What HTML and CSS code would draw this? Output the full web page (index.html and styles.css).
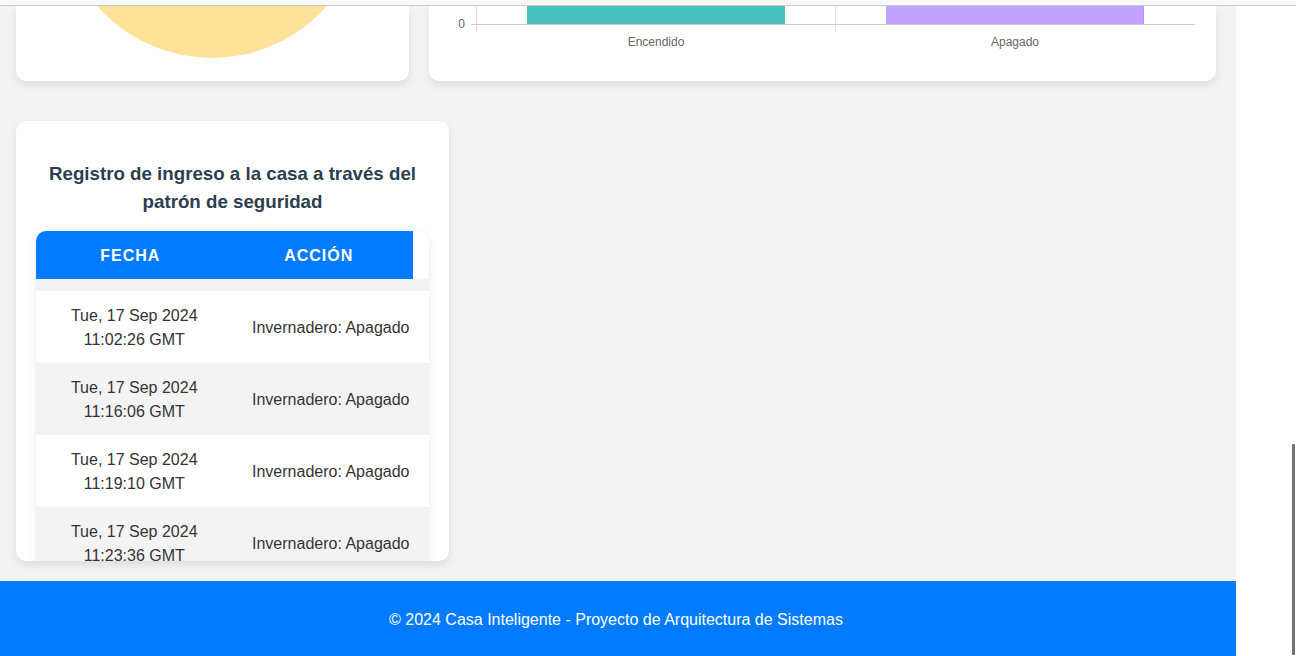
FILE: index.html
```html
<!DOCTYPE html>
<html lang="es">
<head>
<meta charset="utf-8">
<title>Casa Inteligente</title>
<link rel="stylesheet" href="styles.css">
</head>
<body>
<div class="topbar"></div>
<div class="page">
  <div class="main">
    <div class="content">
      <div class="charts">
        <div class="card card-cut">
          <svg class="chart" viewBox="16 6 393 75" width="393" height="75">
            <circle cx="212" cy="-95" r="153" fill="#FFE29A"/>
          </svg>
        </div>
        <div class="card card-cut">
          <svg class="chart" viewBox="429 6 787 75" width="787" height="75">
            <rect x="527" y="6" width="258" height="18" fill="#4BC0C0"/>
            <rect x="886" y="6" width="258" height="18" fill="#C2A3FF"/>
            <line x1="1143.5" y1="6" x2="1143.5" y2="24" stroke="#b494ff" stroke-width="1"/>
            <line x1="476.5" y1="6" x2="476.5" y2="32" stroke="#dcdcdc" stroke-width="1"/>
            <line x1="835.5" y1="6" x2="835.5" y2="32" stroke="#e4e4e4" stroke-width="1"/>
            <line x1="471" y1="24.5" x2="1195" y2="24.5" stroke="#cfcfcf" stroke-width="1"/>
            <text x="465" y="28" text-anchor="end" class="tick">0</text>
            <text x="656" y="46" text-anchor="middle" class="tick">Encendido</text>
            <text x="1015" y="46" text-anchor="middle" class="tick">Apagado</text>
          </svg>
        </div>
      </div>

      <div class="card log-card">
        <h3 class="log-title">Registro de ingreso a la casa a través del patrón de seguridad</h3>
        <div class="log">
          <table class="log-head">
            <thead><tr><th>FECHA</th><th>ACCIÓN</th></tr></thead>
          </table>
          <div class="log-body">
            <table class="log-rows">
              <tbody>
                <tr><td>Tue, 17 Sep 2024<br>11:02:26 GMT</td><td>Invernadero: Apagado</td></tr>
                <tr><td>Tue, 17 Sep 2024<br>11:16:06 GMT</td><td>Invernadero: Apagado</td></tr>
                <tr><td>Tue, 17 Sep 2024<br>11:19:10 GMT</td><td>Invernadero: Apagado</td></tr>
                <tr><td>Tue, 17 Sep 2024<br>11:23:36 GMT</td><td>Invernadero: Apagado</td></tr>
              </tbody>
            </table>
          </div>
        </div>
      </div>
    </div>
    <footer class="footer">© 2024 Casa Inteligente - Proyecto de Arquitectura de Sistemas</footer>
  </div>
  <div class="gutter"><div class="thumb"></div></div>
</div>
</body>
</html>
```

FILE: styles.css
```css
* { box-sizing: border-box; }

html, body {
  margin: 0;
  padding: 0;
  background: #ffffff;
  font-family: "Liberation Sans", Arial, sans-serif;
  color: #333;
  height: 656px;
  overflow: hidden;
}

.topbar {
  position: relative;
  z-index: 2;
  height: 6px;
  background: #f9f9f9;
  border-bottom: 1px solid #c9c9c9;
}

.page {
  display: flex;
}

.main {
  width: 1236px;
  background: #f3f3f3;
  display: flex;
  flex-direction: column;
}

.content {
  padding: 0 20px 20px 16px;
}

.charts {
  display: grid;
  grid-template-columns: 393px 787px;
  gap: 20px;
  margin-bottom: 40px;
}

.card {
  background: #ffffff;
  border-radius: 10px;
  box-shadow: 0 4px 10px rgba(0, 0, 0, 0.09);
}

.card-cut {
  height: 75px;
  border-radius: 0 0 10px 10px;
  overflow: hidden;
}

.chart {
  display: block;
}

.tick {
  font-family: "Liberation Sans", Arial, sans-serif;
  font-size: 12px;
  fill: #666666;
}

.log-card {
  width: 433px;
  height: 440px;
  padding: 20px;
  overflow: hidden;
}

.log-title {
  margin: 0 0 15px;
  padding-top: 19px;
  height: 75px;
  font-size: 18.72px;
  line-height: 28px;
  font-weight: bold;
  text-align: center;
  color: #2c3e50;
}

.log {
  width: 393px;
  background: #ffffff;
  border-radius: 10px;
  overflow: hidden;
  box-shadow: 0 2px 8px rgba(0, 0, 0, 0.08);
}

.log table {
  border-collapse: collapse;
  table-layout: fixed;
}

.log-head {
  width: 377px;
}

.log-head th {
  background: #007bff;
  color: #ffffff;
  height: 48px;
  padding: 1px 0 0;
  font-size: 16px;
  font-weight: bold;
  letter-spacing: 1px;
  text-align: center;
}

.log-body {
  background: #f3f3f3;
  padding-top: 12px;
}

.log-rows {
  width: 100%;
}

.log-rows td {
  height: 72px;
  padding: 13px 8px 11px;
  font-size: 16px;
  line-height: 24px;
  text-align: center;
  color: #333333;
}

.log-rows td:first-child {
  padding-left: 0;
  padding-right: 0;
}

.log-rows tr:nth-child(odd) td { background: #ffffff; }
.log-rows tr:nth-child(even) td { background: #f3f3f3; }

.footer {
  height: 75px;
  padding: 27px 4px 0 0;
  background: #007bff;
  color: #ffffff;
  font-size: 16px;
  line-height: 24px;
  text-align: center;
}

.gutter {
  flex: 1;
  padding-top: 438px;
  padding-left: 56px;
}

.thumb {
  width: 3px;
  height: 211px;
  background: #727272;
  border-radius: 1px;
}
```
